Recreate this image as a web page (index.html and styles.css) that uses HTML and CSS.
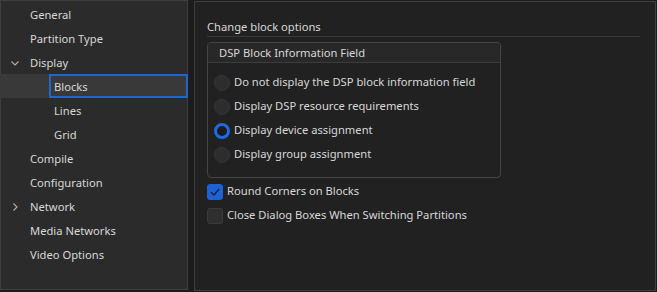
FILE: index.html
```html
<!DOCTYPE html>
<html lang="en">
<head>
  <meta charset="UTF-8">
  <title>Display options</title>
  <link rel="stylesheet" href="styles.css">
</head>
<body>

<div class="window">
  <div class="nav">
    <div class="nav-item">General</div>
    <div class="nav-item">Partition Type</div>
    <div class="nav-item">
      <svg class="chev" width="10" height="10" viewBox="0 0 10 10"><path d="M1.5 3.5 L5 7 L8.5 3.5" /></svg>
      Display
    </div>
    <div class="nav-item child active"><span class="focus">Blocks</span></div>
    <div class="nav-item child">Lines</div>
    <div class="nav-item child">Grid</div>
    <div class="nav-item">Compile</div>
    <div class="nav-item">Configuration</div>
    <div class="nav-item">
      <svg class="chev" width="10" height="10" viewBox="0 0 10 10"><path d="M3.5 1.5 L7 5 L3.5 8.5" /></svg>
      Network
    </div>
    <div class="nav-item">Media Networks</div>
    <div class="nav-item">Video Options</div>
  </div>

  <div class="content">
    <div class="section-title">Change block options</div>

    <div class="group">
      <div class="group-head">DSP Block Information Field</div>
      <div class="group-body">
        <div class="option"><span class="radio"></span>Do not display the DSP block information field</div>
        <div class="option"><span class="radio"></span>Display DSP resource requirements</div>
        <div class="option"><span class="radio on"></span>Display device assignment</div>
        <div class="option"><span class="radio"></span>Display group assignment</div>
      </div>
    </div>

    <div class="checks">
      <div class="check-row">
        <span class="box on">
          <svg width="16" height="16" viewBox="0 0 16 16"><path d="M4 8.2 L7 11 L12 5" /></svg>
        </span>
        Round Corners on Blocks
      </div>
      <div class="check-row"><span class="box"></span>Close Dialog Boxes When Switching Partitions</div>
    </div>
  </div>
</div>

</body>
</html>
```

FILE: styles.css
```css
* {
  box-sizing: border-box;
}

body {
  margin: 0;
  background: #1c1c1c;
  font-family: 'Noto Sans', sans-serif;
  font-size: 11.2px;
  color: #d8d8d8;
}

.window {
  display: flex;
  gap: 6px;
  height: 292px;
}

.nav {
  width: 188px;
  height: 290px;
  background: #2b2b2b;
  border: 1px solid #3e3e3e;
  padding-top: 1px;
}

.nav-item {
  position: relative;
  height: 24px;
  line-height: 25px;
  padding-left: 29px;
}

.nav-item.child {
  padding-left: 53px;
}

.nav-item.active {
  background: #393939;
  margin-left: -1px;
  padding-left: 54px;
}

.focus {
  display: block;
  margin-left: -5px;
  padding-left: 3px;
  height: 24px;
  line-height: 21px;
  border: 2px solid #1f66d1;
  margin-right: -1px;
}

.chev {
  position: absolute;
  left: 9px;
  top: 8px;
}

.chev path {
  fill: none;
  stroke: #b0b0b0;
  stroke-width: 1.1;
}

.content {
  flex: 1;
  margin-top: 1px;
  margin-right: 1px;
  height: 290px;
  background: #212121;
  border: 1px solid #3e3e3e;
  padding: 16px 15px 0 12px;
}

.section-title {
  height: 19px;
  line-height: 18px;
  border-bottom: 1px solid #3a3a3a;
  margin-bottom: 5px;
}

.group {
  width: 294px;
  border: 1px solid #444;
  border-radius: 4px;
  padding-bottom: 11px;
}

.group-head {
  height: 20px;
  line-height: 19px;
  padding-left: 11px;
  background: #282828;
  border-bottom: 1px solid #3c3c3c;
  border-radius: 4px 4px 0 0;
}

.group-body {
  padding-top: 7px;
}

.option {
  display: flex;
  align-items: center;
  height: 24px;
  padding-left: 6px;
  line-height: 14px;
}

.radio {
  width: 16px;
  height: 16px;
  border-radius: 50%;
  background: #2d2d2d;
  border: 1px solid #363636;
  margin-right: 4px;
  margin-top: 1px;
}

.radio.on {
  background: #1b1b1b;
  border: 3px solid #1d6be0;
}

.checks {
  padding-top: 1px;
}

.check-row {
  display: flex;
  align-items: center;
  height: 24px;
  line-height: 14px;
}

.box {
  width: 16px;
  height: 16px;
  border-radius: 3px;
  background: #2f2f2f;
  border: 1px solid #3a3a3a;
  margin-right: 4px;
  margin-top: 1px;
}

.box.on {
  background: #1d62d4;
  border-color: #1d62d4;
}

.box svg {
  display: block;
  margin: -1px;
}

.box path {
  fill: none;
  stroke: #16233a;
  stroke-width: 1.4;
}
```
